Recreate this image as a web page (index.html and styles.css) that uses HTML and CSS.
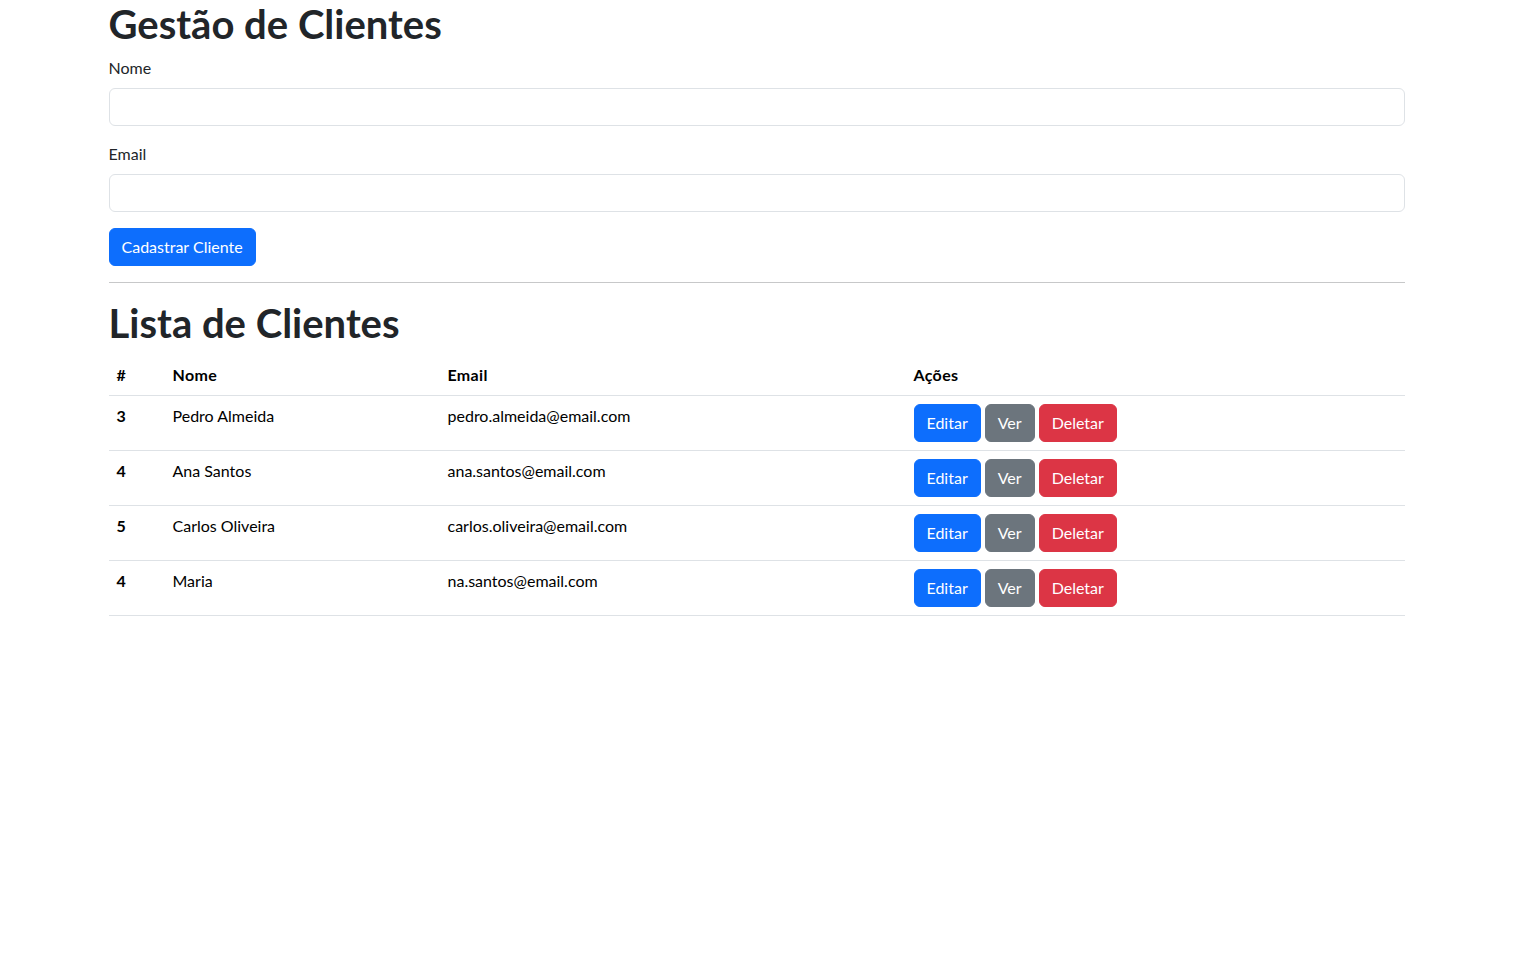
FILE: index.html
```html
<!DOCTYPE html>
<html lang="pt-BR">
<head>
<meta charset="utf-8">
<title>Gestão de Clientes</title>
<link rel="stylesheet" href="styles.css">
</head>
<body>
<div class="container">
  <h1 class="title">Gestão de Clientes</h1>
  <form class="form">
    <div class="field">
      <label class="form-label" for="nome">Nome</label>
      <input class="form-control" id="nome" type="text">
    </div>
    <div class="field">
      <label class="form-label" for="email">Email</label>
      <input class="form-control" id="email" type="email">
    </div>
    <button type="button" class="btn btn-primary">Cadastrar Cliente</button>
  </form>
  <hr class="divider">
  <h1 class="title">Lista de Clientes</h1>
  <table class="table">
    <thead>
      <tr>
        <th class="col-id">#</th>
        <th class="col-name">Nome</th>
        <th class="col-email">Email</th>
        <th class="col-actions">Ações</th>
      </tr>
    </thead>
    <tbody>
      <tr>
        <th>3</th><td>Pedro Almeida</td><td>pedro.almeida@email.com</td>
        <td><div class="actions"><button class="btn btn-primary">Editar</button><button class="btn btn-secondary">Ver</button><button class="btn btn-danger">Deletar</button></div></td>
      </tr>
      <tr>
        <th>4</th><td>Ana Santos</td><td>ana.santos@email.com</td>
        <td><div class="actions"><button class="btn btn-primary">Editar</button><button class="btn btn-secondary">Ver</button><button class="btn btn-danger">Deletar</button></div></td>
      </tr>
      <tr>
        <th>5</th><td>Carlos Oliveira</td><td>carlos.oliveira@email.com</td>
        <td><div class="actions"><button class="btn btn-primary">Editar</button><button class="btn btn-secondary">Ver</button><button class="btn btn-danger">Deletar</button></div></td>
      </tr>
      <tr>
        <th>4</th><td>Maria</td><td>na.santos@email.com</td>
        <td><div class="actions"><button class="btn btn-primary">Editar</button><button class="btn btn-secondary">Ver</button><button class="btn btn-danger">Deletar</button></div></td>
      </tr>
    </tbody>
  </table>
</div>
</body>
</html>
```
FILE: styles.css
```css
*, *::before, *::after { box-sizing: border-box; }

body {
  margin: 0;
  font-family: Lato, "Liberation Sans", sans-serif;
  font-size: 16px;
  line-height: 1.5;
  color: #212529;
  background: #fff;
}

.container {
  width: 1320px;
  margin: 0 auto;
  padding: 0 12px;
}

.title {
  margin: 0 0 8px;
  font-size: 40px;
  font-weight: 700;
  line-height: 1.2;
  color: #212529;
}

.field { margin-bottom: 16px; }

.form-label {
  display: inline-block;
  margin-bottom: 8px;
}

.form-control {
  display: block;
  width: 100%;
  height: 38px;
  padding: 6px 12px;
  font: inherit;
  color: #212529;
  background: #fff;
  border: 1px solid #dee2e6;
  border-radius: 6px;
  outline: none;
}

.btn {
  display: inline-block;
  padding: 6px 12px;
  font: inherit;
  font-size: 16px;
  line-height: 24px;
  color: #fff;
  border: 1px solid transparent;
  border-radius: 6px;
  cursor: pointer;
}
.btn-primary { background: #0d6efd; border-color: #0d6efd; }
.btn-secondary { background: #6c757d; border-color: #6c757d; }
.btn-danger { background: #dc3545; border-color: #dc3545; }

.divider {
  margin: 16px 0;
  border: 0;
  border-top: 1px solid #212529;
  opacity: .25;
}

.table {
  width: 100%;
  margin-bottom: 16px;
  border-collapse: collapse;
  color: #000;
}
.table th, .table td {
  padding: 8px;
  text-align: left;
  vertical-align: top;
  border-bottom: 1px solid #dee2e6;
}
.table th { font-weight: 700; }
.table thead th { vertical-align: bottom; letter-spacing: .02em; }

.col-id { width: 56px; }
.col-name { width: 275px; }
.col-email { width: 466px; }

.actions {
  display: flex;
  gap: 4px;
}
```
